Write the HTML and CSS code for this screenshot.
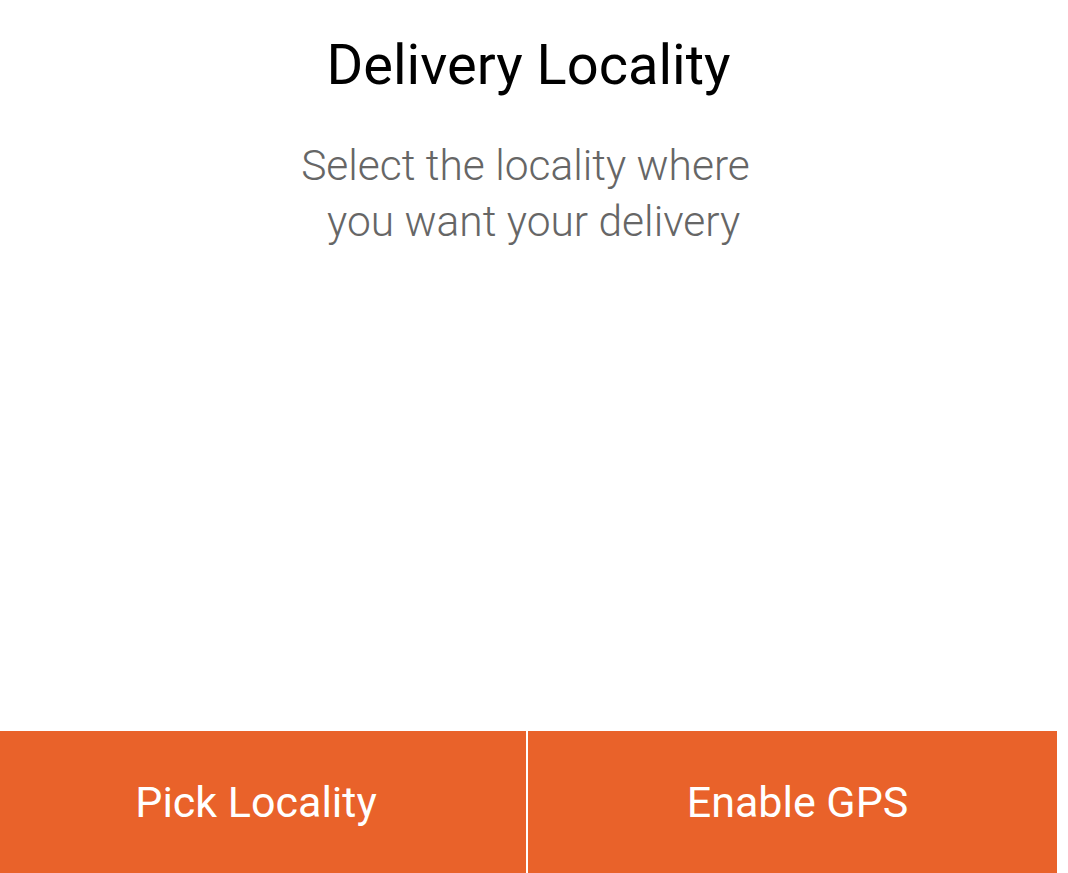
FILE: index.html
```html
<!DOCTYPE html>
<html lang="en">
<head>
  <meta charset="UTF-8">
  <meta name="viewport" content="width=device-width, initial-scale=1.0">
  <title>Delivery Locality</title>
  <link rel="stylesheet" href="styles.css">
</head>
<body>
  <div class="screen">
    <div class="intro">
      <h1 class="title">Delivery Locality</h1>
      <p class="subtitle"><span class="subtitle-first">Select the locality where</span><br>&nbsp;you want your delivery</p>
    </div>

    <div class="actions">
      <button class="action action-pick">Pick Locality</button>
      <button class="action action-gps">Enable GPS</button>
    </div>
  </div>
</body>
</html>
```

FILE: styles.css
```css
html, body { margin: 0; padding: 0; background: #fff; }
body { font-family: Roboto, "Noto Sans", Arial, sans-serif; }
.screen { width: 1057px; height: 873px; display: flex; flex-direction: column; }
.intro { flex: 1; text-align: center; padding-top: 32px; }
.title { margin: 0; font-size: 56px; font-weight: 400; line-height: 66px; color: #000; }
.subtitle { margin: 40px 0 0; font-size: 42.5px; font-weight: 300; line-height: 56px; color: #666; }
.subtitle-first { padding-right: 6px; }
.actions { display: grid; grid-template-columns: 526px 529px; gap: 2px; height: 142px; }
.action { border: none; margin: 0; padding: 0; background: #e9622a; color: #fff; font-family: Roboto, Arial, sans-serif; font-size: 43px; font-weight: 400; cursor: pointer; }
.action-pick { padding-right: 14px; }
.action-gps { padding-left: 10px; }
```
